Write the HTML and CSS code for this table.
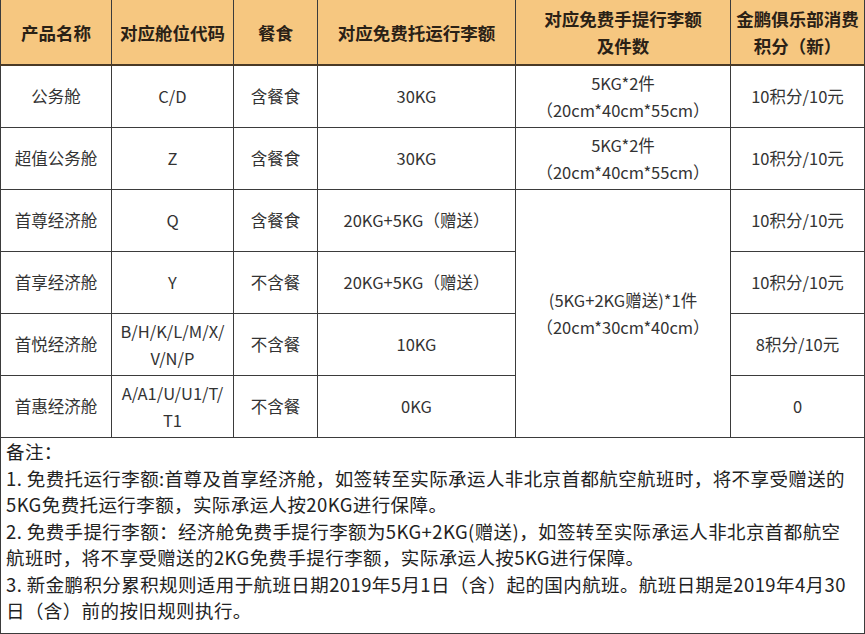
FILE: index.html
```html
<!DOCTYPE html>
<html lang="zh-CN">
<head>
<meta charset="utf-8">
<title>舱位行李额</title>
<link rel="stylesheet" href="styles.css">
</head>
<body>
<table class="fare">
  <colgroup>
    <col class="c1"><col class="c2"><col class="c3"><col class="c4"><col class="c5"><col class="c6">
  </colgroup>
  <thead>
    <tr class="head">
      <th>产品名称</th>
      <th>对应舱位代码</th>
      <th>餐食</th>
      <th>对应免费托运行李额</th>
      <th>对应免费手提行李额<br>及件数</th>
      <th>金鹏俱乐部消费<br>积分（新）</th>
    </tr>
  </thead>
  <tbody>
    <tr class="r1">
      <td>公务舱</td>
      <td>C/D</td>
      <td>含餐食</td>
      <td>30KG</td>
      <td>5KG*2件<br>（20cm*40cm*55cm）</td>
      <td>10积分/10元</td>
    </tr>
    <tr class="r2">
      <td>超值公务舱</td>
      <td>Z</td>
      <td>含餐食</td>
      <td>30KG</td>
      <td>5KG*2件<br>（20cm*40cm*55cm）</td>
      <td>10积分/10元</td>
    </tr>
    <tr class="r3">
      <td>首尊经济舱</td>
      <td>Q</td>
      <td>含餐食</td>
      <td>20KG+5KG（赠送）</td>
      <td rowspan="4">(5KG+2KG赠送)*1件<br>（20cm*30cm*40cm）</td>
      <td>10积分/10元</td>
    </tr>
    <tr class="r4">
      <td>首享经济舱</td>
      <td>Y</td>
      <td>不含餐</td>
      <td>20KG+5KG（赠送）</td>
      <td>10积分/10元</td>
    </tr>
    <tr class="r5">
      <td>首悦经济舱</td>
      <td>B/H/K/L/M/X/<br>V/N/P</td>
      <td>不含餐</td>
      <td>10KG</td>
      <td>8积分/10元</td>
    </tr>
    <tr class="r6">
      <td>首惠经济舱</td>
      <td>A/A1/U/U1/T/<br>T1</td>
      <td>不含餐</td>
      <td>0KG</td>
      <td>0</td>
    </tr>
    <tr class="notes">
      <td colspan="6">
        <div class="note-line">备注：</div>
        <div class="note-line">1. 免费托运行李额:首尊及首享经济舱，如签转至实际承运人非北京首都航空航班时，将不享受赠送的<br>5KG免费托运行李额，实际承运人按20KG进行保障。</div>
        <div class="note-line">2. 免费手提行李额：经济舱免费手提行李额为5KG+2KG(赠送)，如签转至实际承运人非北京首都航空<br>航班时，将不享受赠送的2KG免费手提行李额，实际承运人按5KG进行保障。</div>
        <div class="note-line">3. 新金鹏积分累积规则适用于航班日期2019年5月1日（含）起的国内航班。航班日期是2019年4月30<br>日（含）前的按旧规则执行。</div>
      </td>
    </tr>
  </tbody>
</table>
</body>
</html>
```

FILE: styles.css
```css
html, body {
  margin: 0;
  padding: 0;
  background: #ffffff;
}

body {
  font-family: "Microsoft YaHei", "Noto Sans CJK SC", "Noto Sans", sans-serif;
  color: #333333;
}

.fare {
  border-collapse: collapse;
  table-layout: fixed;
  width: 864px;
}

.c1 { width: 111px; }
.c2 { width: 122px; }
.c3 { width: 84px; }
.c4 { width: 198px; }
.c5 { width: 215px; }
.c6 { width: 134px; }

.fare th,
.fare td {
  border: 1px solid #3b3b3b;
  text-align: center;
  vertical-align: middle;
  padding: 0;
}

.fare th {
  background: #f6c780;
  color: #2a2116;
  font-weight: bold;
  font-size: 17.5px;
  line-height: 27px;
  height: 64px;
  border-top: none;
  border-bottom: 2px solid #4a3a26;
  white-space: nowrap;
}

.fare td {
  font-size: 16.5px;
  line-height: 27px;
  white-space: nowrap;
  color: #333333;
}

.r1 td, .r2 td, .r3 td, .r4 td, .r5 td, .r6 td {
  height: 61px;
}

.notes td {
  text-align: left;
  vertical-align: top;
  font-size: 18.5px;
  letter-spacing: 0.4px;
  line-height: 26.5px;
  padding: 0 0 1px 5px;
  color: #222222;
  height: 194px;
}

.note-line {
  margin: 0;
}
```
